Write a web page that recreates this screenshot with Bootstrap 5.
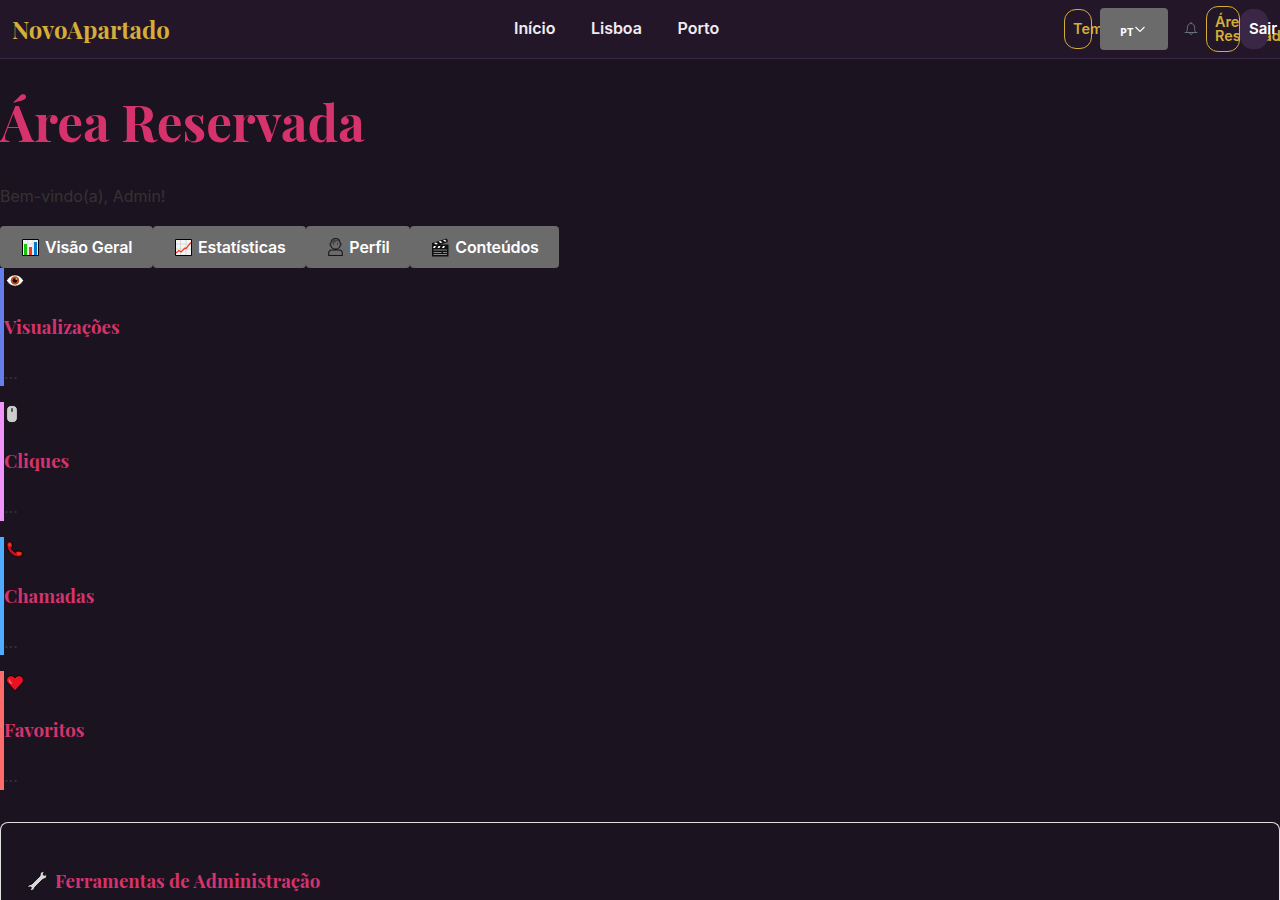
<!DOCTYPE html>
<html lang="pt">
<head>
<meta charset="utf-8">
<meta name="viewport" content="width=device-width, initial-scale=1">
<title>NovoApartado</title>
<link href="https://cdn.jsdelivr.net/npm/bootstrap@5.3.0/dist/css/bootstrap.min.css" rel="stylesheet">
<style>
body{background:#1c1320;color:#333;font:400 16px/25.6px Inter,sans-serif;height:900px;overflow:hidden}
.topbar{height:59px;background:#241629;border-bottom:1px solid #3b2746}
h1,h2,h3,.brand{font-family:"Playfair Display","Liberation Serif",serif;font-weight:700;color:#d6336c;white-space:nowrap}
.brand{color:#d4af37;font-size:24px;line-height:30px;text-decoration:none}
.menu{gap:35.7px;left:514px;top:15px}
.menu a{color:#f0eaf2;font-weight:600;line-height:26px;text-decoration:none;letter-spacing:-.05px}
.actions{width:216px}
.pill{border:1px solid #d4af37;color:#d4af37;border-radius:12px;font-size:14.4px;font-weight:600;line-height:14px;padding:0 8px;display:flex;align-items:center;background:none;text-align:left}
.pill.tema{width:28px;height:40px;margin-right:8px}
.pill.area{width:34px;height:46px;margin-left:8px}
.pill.sair{width:28px;height:40px;background:#3a2745;border-color:#3a2745;color:#fff;font-size:15px;z-index:2;position:relative}
.lang{width:68px;height:42px;background:#6b6b6b;border-radius:4px;color:#fff;font:700 11px/16px "Open Sans",sans-serif;z-index:1;position:relative;padding:6px 0 0 20px;border:0}
h1{font-size:51.2px;line-height:64px;margin:30px 0 31px}
.tabs button{height:42px;border:0;border-radius:4px;background:#6b6b6b;color:#fff;font-weight:600;padding:0 20.6px 0 21px;gap:4px}
.tabs span{padding-top:1px;letter-spacing:-.12px}
.stat{height:118.4px;margin-bottom:16px;border-left:4px solid;}
.stat .pic{height:26px;padding-left:2px}
.stat h3,h2{font-size:18.72px;line-height:26px;margin:0}
.stat h3{margin-top:20px}
.stat p{margin:20px 0 0;line-height:26px;color:#333}
svg{display:block;flex:none}
.views{border-color:#667eea}.clicks{border-color:#f093fb}.calls{border-color:#4facfe}.favs{border-color:#ff6b6b}
.tools{margin-top:32px;height:78px;border:1px solid #e0e0e0;border-bottom:0;border-radius:8px 8px 0 0;padding:45px 26px 0}
</style>
</head>
<body>
<header class="topbar position-relative d-flex align-items-center justify-content-between ps-2">
  <a class="brand ms-1" href="#">NovoApartado</a>
  <nav class="menu d-flex position-absolute"><a href="#">Início</a><a href="#">Lisboa</a><a href="#">Porto</a></nav>
  <div class="actions d-flex align-items-center">
    <button class="pill tema">Tema</button>
    <button class="lang d-flex align-items-center"><span>PT</span><svg class="mb-2" style="margin-left:1px" width="12" height="10" viewBox="0 0 12 10" fill="none" stroke="#fff" stroke-width="1.1"><path d="M1.500 4 6 8.500 10.500 4"/></svg></button>
    <svg style="margin-left:16px" width="14" height="16" viewBox="0 0 14 16" fill="none" stroke="#697080" stroke-width="1"><path d="M.7 11.500h12.600M2.200 11.200c1-1 1.200-2.200 1.200-4.700C3.400 4 5 2.500 7 2.500s3.600 1.500 3.600 4c0 2.500.2 3.700 1.200 4.700M7 1v1.500M5.700 12c0 2 2.600 2 2.600 0"/></svg>
    <button class="pill area">Área Reservada</button>
    <button class="pill sair">Sair</button>
  </div>
</header>
<main>
  <h1>Área Reservada</h1>
  <p class="mb-0" style="height:42px">Bem-vindo(a), Admin!</p>
  <div class="tabs d-flex">
    <button class="d-flex align-items-center"><svg width="20" height="18" viewBox="0 0 20 18"><path d="M1.500 1.500h16v16h-16z" fill="#f4f4f4" stroke="#000"/><path d="M2 6h15M2 11h15M6.500 2v15M12 2v15" stroke="#d9d9d9" stroke-width=".7"/><path d="M3 6h3v11H3z" fill="#16c60c"/><path d="M8 9h3v8H8z" fill="#f03a17"/><path d="M13 4h3v13h-3z" fill="#0078d4"/></svg><span>Visão Geral</span></button>
    <button class="d-flex align-items-center"><svg width="20" height="18" viewBox="0 0 20 18"><path d="M1.500 1.500h16v16h-16z" fill="#f4f4f4" stroke="#000"/><path d="M2 6h15M2 11h15M6.500 2v15M12 2v15" stroke="#d0d0d0" stroke-width=".7"/><path d="m2 15 3-2.500 2 1.500 4-4 1 .5 5-6" fill="none" stroke="#f03a17" stroke-width="1.200"/></svg><span>Estatísticas</span></button>
    <button class="d-flex align-items-center"><svg width="18" height="20" viewBox="0 0 18 20" fill="none" stroke="#171717" stroke-width="1.100"><path d="M4 9C2.500 8 3 6 4 6c0-6 9-6 9 0 1 0 1.500 2 0 3-.8 4-8.200 4-9 0zM1.700 18.500v-2c0-2 1.300-3.500 3.300-3.500h7c2 0 3.300 1.500 3.300 3.500v2z"/><path d="M4 5.500C5 1 12 1 13 5.500L10 4 7 6z" fill="#444" stroke="none"/><path d="M6 7h1m3 0h1"/></svg><span>Perfil</span></button>
    <button class="d-flex align-items-center"><svg width="20" height="19" viewBox="0 0 20 19"><path d="M1 5 16 .5l1 3.500-8 2.500h8.500v12H1z" fill="#111"/><path d="m3 5 2 1.500 2-.6-2-1.500zm4.500-1.400 2 1.500 2-.6-2-1.500zM12 2.200l2 1.500 1.500-.5-1.500-1.500zM3 8h2l-1 2H2zm4.500 0h2l-1 2h-2zM12 8h2l-1 2h-2z" fill="#fff"/><path d="M2.500 12h13.500M2.500 14.500h8m1.500 0h4M2.500 16.500h13.500" stroke="#888" stroke-width="1"/></svg><span>Conteúdos</span></button>
  </div>
  <section class="stat views"><div class="pic"><svg width="18" height="26" viewBox="0 0 18 26"><path d="M.5 12.500C4.500 5 13.500 5 17.500 12.500 13.500 20 4.500 20 .5 12.500z" fill="#fff" stroke="#000" stroke-width=".7"/><circle cx="9" cy="12.500" r="4.300" fill="#ca5010"/><circle cx="9" cy="12.500" r="2.300"/><circle cx="10.200" cy="11" r=".8" fill="#fff"/></svg></div><h3>Visualizações</h3><p>...</p></section>
  <section class="stat clicks"><div class="pic"><svg width="14" height="26" viewBox="0 0 14 26"><rect x=".6" y="3.500" width="10.800" height="17" rx="4.500" fill="#ccc" stroke="#000" stroke-width=".8"/><rect x="5" y="6" width="2" height="4" rx="1" fill="#555"/></svg></div><h3>Cliques</h3><p>...</p></section>
  <section class="stat calls"><div class="pic"><svg width="18" height="26" viewBox="0 0 18 26"><path d="M1 6.500C2 4 5.200 4.300 5.800 6.500l.7 2.800-1.500 1.500c.8 2 2.300 3.600 4.500 4.600l1.500-1.500 3.700.3c2 .4 2.400 2 1.800 3.500C12 24 -.5 15.500 1 6.500z" fill="#c50f1f" stroke="#000" stroke-width=".8"/><path d="m2 7 2.800-1.200.9 3-2.800 1zm9.300 8.100 3.700.3-.5 2.800-3.400-.5z" fill="#f03a17"/></svg></div><h3>Chamadas</h3><p>...</p></section>
  <section class="stat favs"><div class="pic"><svg width="18" height="26" viewBox="0 0 18 26"><path d="M9 7C5.500 2-1 6 .9 11L9 19.800 17.100 11C19 6 12.500 2 9 7z" fill="#e81224" stroke="#000" stroke-width=".8"/><path d="M3.200 8.500q0 2 2.600 4" fill="none" stroke="#ff7967" stroke-width="1.200"/></svg></div><h3>Favoritos</h3><p>...</p></section>
  <section class="tools"><h2 class="d-flex align-items-center"><svg style="margin-right:7px" width="21" height="20" viewBox="0 0 21 20"><path d="m1 14.500 4-1.500 8-8 .5-3.500L17.500 0 16 3.500l1.500 1L20 3l-.8 4-3.700 1.500L8 16l-1.500 3-4 .8 2-3-1-1-2.500 1z" fill="#d8d8d8" stroke="#000" stroke-width=".8"/></svg><span>Ferramentas de Administração</span></h2></section>
</main>
<script src="https://cdn.jsdelivr.net/npm/bootstrap@5.3.0/dist/js/bootstrap.bundle.min.js"></script>
</body>
</html>
